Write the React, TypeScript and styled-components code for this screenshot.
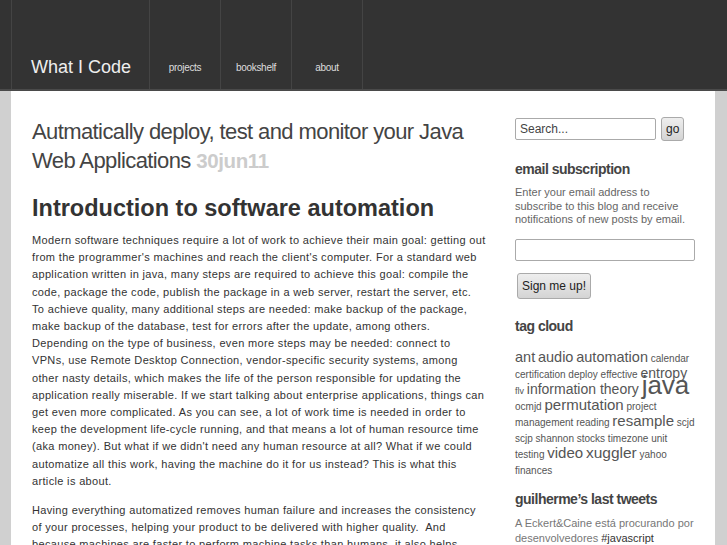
import React from 'react';
import styled, { createGlobalStyle } from 'styled-components';

const GlobalStyle = createGlobalStyle`
  body {
    margin: 0;
    background: #d0d0d0;
    font-family: "Liberation Sans", Arial, sans-serif;
  }
`;

const Header = styled.header`
  background: #333;
  border-bottom: 2px solid #4a4a4a;
  height: 89px;
`;

const HeaderInner = styled.div`
  display: flex;
  height: 100%;
  margin-left: 11px;
`;

const Logo = styled.a`
  display: flex;
  align-items: flex-end;
  width: 118px;
  padding: 0 0 11px 19px;
  border-left: 1px solid #444;
  color: #eee;
  font-size: 18px;
  text-decoration: none;
`;

const NavItem = styled.a<{ $last?: boolean }>`
  display: flex;
  align-items: flex-end;
  justify-content: center;
  width: 70px;
  padding-bottom: 16px;
  border-left: 1px solid #444;
  border-right: ${(p) => (p.$last ? '1px solid #444' : 'none')};
  color: #ddd;
  font-size: 10px;
  letter-spacing: -0.3px;
  text-decoration: none;
`;

const Page = styled.div`
  margin: 0 12px 0 11px;
  background: #fff;
  display: flex;
  gap: 25px;
  padding: 26px 0 0 21px;
  height: 428px;
  overflow: hidden;
`;

const Main = styled.main`
  width: 458px;
  flex-shrink: 0;
`;

const PostTitle = styled.h1`
  margin: 0;
  font-size: 22px;
  font-weight: normal;
  line-height: 29px;
  color: #444;
  letter-spacing: -0.6px;
`;

const PostDate = styled.span`
  color: #ccc;
  font-weight: bold;
  font-size: 20.5px;
  letter-spacing: -0.4px;
`;

const SectionTitle = styled.h2`
  margin: 18px 0 9px;
  font-size: 23.5px;
  line-height: 30px;
  color: #333;
`;

const Para = styled.p`
  margin: 0 0 12px;
  font-size: 11px;
  line-height: 17.2px;
  color: #333;
  letter-spacing: 0.34px;
  white-space: nowrap;
`;

const Sidebar = styled.aside`
  width: 180px;
  flex-shrink: 0;
`;

const SearchRow = styled.form`
  display: flex;
  gap: 5px;
  align-items: center;
`;

const TextInput = styled.input<{ $w: number }>`
  box-sizing: border-box;
  width: ${(p) => p.$w}px;
  height: 22px;
  border: 1px solid #aaa;
  border-radius: 2px;
  padding: 2px 4px;
  font-family: "Liberation Sans", Arial, sans-serif;
  font-size: 12px;
  color: #444;
  &::placeholder {
    color: #444;
  }
`;

const Button = styled.button`
  background: linear-gradient(#eee, #d4d4d4);
  border: 1px solid #aaa;
  border-radius: 3px;
  padding: 4px 4px;
  font-family: "Liberation Sans", Arial, sans-serif;
  font-size: 12px;
  color: #222;
`;

const WidgetTitle = styled.h3<{ $top?: number }>`
  margin: ${(p) => p.$top ?? 18}px 0 8px;
  font-size: 14px;
  line-height: 18px;
  color: #444;
  letter-spacing: -0.5px;
`;

const SmallText = styled.p`
  margin: 0 0 12px;
  font-size: 11px;
  line-height: 13.5px;
  color: #666;
`;

const SignupButton = styled(Button)`
  display: block;
  margin: 12px 0 0 2px;
  padding: 5px 4px;
`;

const Cloud = styled.div`
  margin-top: 16px;
  font-size: 10px;
  line-height: 16px;
  color: #555;
`;

// bigger tags get a tighter line-height so every row of the cloud stays 16px tall
const Tag = styled.a<{ $size: number }>`
  font-size: ${(p) => p.$size}px;
  line-height: ${(p) => 16 - 0.693 * (p.$size - 10)}px;
  color: #555;
  text-decoration: none;
`;

const Tweet = styled.p`
  margin: 6px 0 0;
  font-size: 11px;
  line-height: 15px;
  color: #777;
  b {
    font-weight: normal;
    color: #333;
  }
`;

const tags: [string, number][] = [
  ['ant', 14.5], ['audio', 14.5], ['automation', 14.5], ['calendar', 10],
  ['certification', 10], ['deploy', 10], ['effective', 10], ['entropy', 14],
  ['flv', 9], ['information theory', 14], ['java', 26],
  ['ocmjd', 10], ['permutation', 15], ['project management', 10], ['reading', 10],
  ['resample', 15], ['scjd', 10], ['scjp', 10], ['shannon', 10], ['stocks', 10],
  ['timezone', 10], ['unit testing', 10], ['video', 15], ['xuggler', 15.5],
  ['yahoo finances', 10],
];

const intro = [
  'Modern software techniques require a lot of work to achieve their main goal: getting out',
  "from the programmer's machines and reach the client's computer. For a standard web",
  'application written in java, many steps are required to achieve this goal: compile the',
  'code, package the code, publish the package in a web server, restart the server, etc.',
  'To achieve quality, many additional steps are needed: make backup of the package,',
  'make backup of the database, test for errors after the update, among others.',
  'Depending on the type of business, even more steps may be needed: connect to',
  'VPNs, use Remote Desktop Connection, vendor-specific security systems, among',
  'other nasty details, which makes the life of the person responsible for updating the',
  'application really miserable. If we start talking about enterprise applications, things can',
  'get even more complicated. As you can see, a lot of work time is needed in order to',
  'keep the development life-cycle running, and that means a lot of human resource time',
  "(aka money). But what if we didn't need any human resource at all? What if we could",
  'automatize all this work, having the machine do it for us instead? This is what this',
  'article is about.',
];

const benefits = [
  'Having everything automatized removes human failure and increases the consistency',
  'of your processes, helping your product to be delivered with higher quality.\u00a0 And',
  'because machines are faster to perform machine tasks than humans, it also helps',
  'to reduce the time needed to deliver new versions of your software.',
];

function Lines({ lines }: { lines: string[] }) {
  return (
    <>
      {lines.map((line, i) => (
        <React.Fragment key={i}>
          {line}
          {i < lines.length - 1 && <br />}
        </React.Fragment>
      ))}
    </>
  );
}

export default function App() {
  return (
    <>
      <GlobalStyle />
      <Header>
        <HeaderInner>
          <Logo href="#">What I Code</Logo>
          <NavItem href="#">projects</NavItem>
          <NavItem href="#">bookshelf</NavItem>
          <NavItem href="#" $last>about</NavItem>
        </HeaderInner>
      </Header>
      <Page>
        <Main>
          <PostTitle>
            Autmatically deploy, test and monitor your Java Web Applications <PostDate>30jun11</PostDate>
          </PostTitle>
          <SectionTitle>Introduction to software automation</SectionTitle>
          <Para>
            <Lines lines={intro} />
          </Para>
          <Para>
            <Lines lines={benefits} />
          </Para>
        </Main>
        <Sidebar>
          <SearchRow onSubmit={(e) => e.preventDefault()}>
            <TextInput $w={141} placeholder="Search..." />
            <Button type="submit">go</Button>
          </SearchRow>
          <WidgetTitle $top={19}>email subscription</WidgetTitle>
          <SmallText>
            Enter your email address to subscribe to this blog and receive notifications of new
            posts by email.
          </SmallText>
          <TextInput $w={180} />
          <SignupButton>Sign me up!</SignupButton>
          <WidgetTitle $top={18}>tag cloud</WidgetTitle>
          <Cloud>
            {tags.map(([name, size], i) => (
              <React.Fragment key={name}>
                <Tag href="#" $size={size}>{name}</Tag>
                {i < tags.length - 1 ? ' ' : ''}
              </React.Fragment>
            ))}
          </Cloud>
          <WidgetTitle $top={11}>guilherme’s last tweets</WidgetTitle>
          <Tweet>
            A Eckert&amp;Caine está procurando por desenvolvedores <b>#javascript</b>
          </Tweet>
        </Sidebar>
      </Page>
    </>
  );
}
